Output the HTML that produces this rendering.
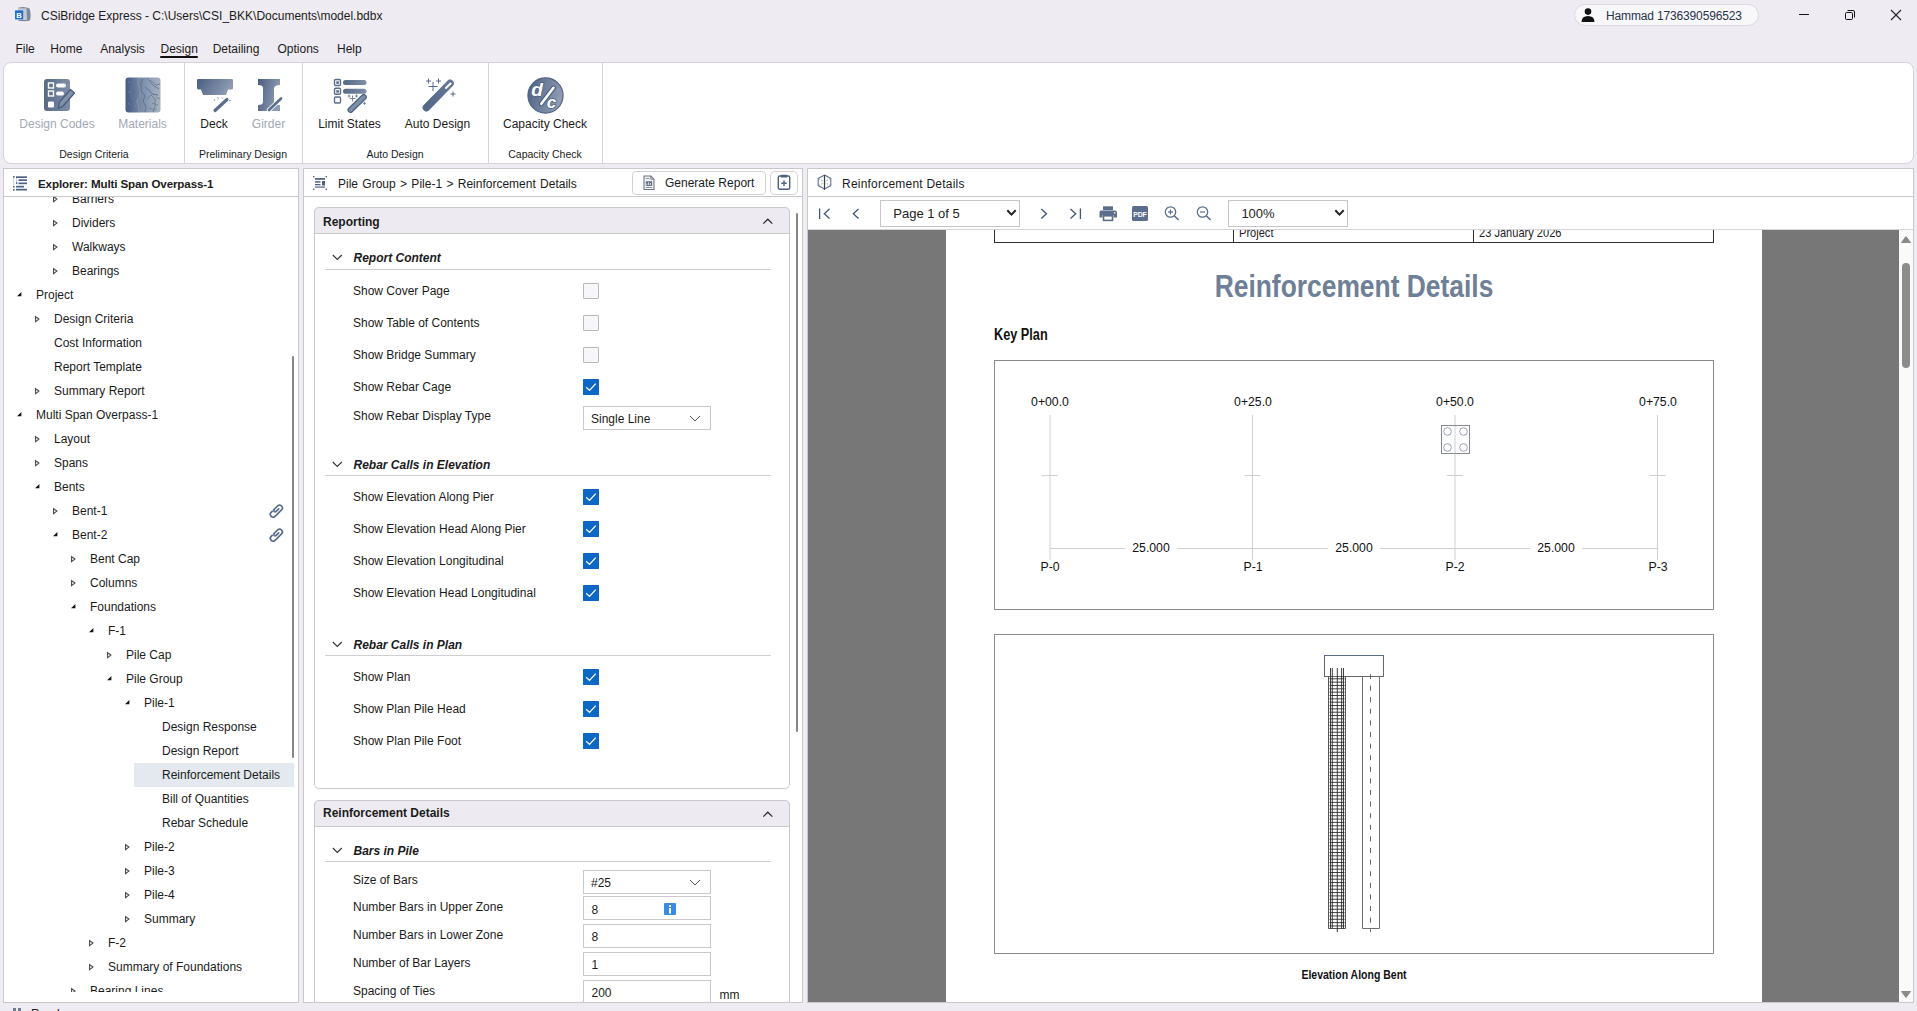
<!DOCTYPE html><html><head><meta charset="utf-8"><style>
*{box-sizing:border-box;margin:0;padding:0}
html,body{width:1917px;height:1011px;overflow:hidden;background:#EEEBF2;font-family:"Liberation Sans",sans-serif;color:#1B1B1B;position:relative}
.a{position:absolute;white-space:nowrap}
svg.a{overflow:visible}
</style></head><body><svg class="a" style="left:14px;top:6px" width="18" height="16" viewBox="0 0 18 16">
<path d="M4.5 1.5 Q11 0 15.5 2.5 Q17.5 8 16 14.5 Q11 15.8 4.5 14.8 Z" fill="#7D889B"/>
<path d="M4 2.2 L12.5 2.2 L13 14 L4 14Z" fill="#C3CAD5"/>
<rect x="1" y="4.4" width="8.2" height="9" fill="#1F6FD2"/>
<text x="2.2" y="11.8" font-family="Liberation Sans" font-weight="bold" font-size="7.6" fill="#fff">B</text>
</svg>
<div class="a" style="left:41px;top:9.84px;font-size:12px;line-height:12px;font-weight:normal;">CSiBridge Express - C:\Users\CSI_BKK\Documents\model.bdbx</div>
<div class="a" style="left:1574px;top:4px;width:185px;height:22px;background:#F8F7FA;border:1px solid #DCDAE0;border-radius:11px"></div>
<svg class="a" style="left:1580px;top:8px" width="16" height="15" viewBox="0 0 16 15"><circle cx="8" cy="3.6" r="3.3" fill="#111"/><path d="M1.5 14 Q1.5 8 8 8 Q14.5 8 14.5 14Z" fill="#111"/></svg>
<div class="a" style="left:1606px;top:9.84px;font-size:12px;line-height:12px;font-weight:normal;color:#27344A;letter-spacing:-0.15px">Hammad 1736390596523</div>
<div class="a" style="left:1799px;top:14px;width:10px;height:1px;background:#111"></div>
<svg class="a" style="left:1844px;top:9px" width="12" height="12" viewBox="0 0 12 12"><rect x="1.5" y="3.5" width="7" height="7" rx="1.2" fill="none" stroke="#111" stroke-width="1"/><path d="M3.5 1.5 H9 Q10.5 1.5 10.5 3 V8.5" fill="none" stroke="#111" stroke-width="1"/></svg>
<svg class="a" style="left:1890px;top:9px" width="12" height="12" viewBox="0 0 12 12"><path d="M1 1 L11 11 M11 1 L1 11" stroke="#222" stroke-width="1.1"/></svg>
<div class="a" style="left:15.4px;top:42.84px;font-size:12px;line-height:12px;font-weight:normal;">File</div>
<div class="a" style="left:50.3px;top:42.84px;font-size:12px;line-height:12px;font-weight:normal;">Home</div>
<div class="a" style="left:100.2px;top:42.84px;font-size:12px;line-height:12px;font-weight:normal;">Analysis</div>
<div class="a" style="left:160.5px;top:42.84px;font-size:12px;line-height:12px;font-weight:normal;">Design</div>
<div class="a" style="left:212.7px;top:42.84px;font-size:12px;line-height:12px;font-weight:normal;">Detailing</div>
<div class="a" style="left:277.5px;top:42.84px;font-size:12px;line-height:12px;font-weight:normal;">Options</div>
<div class="a" style="left:337px;top:42.84px;font-size:12px;line-height:12px;font-weight:normal;">Help</div>
<div class="a" style="left:160px;top:56px;width:38px;height:2px;background:#111;border-radius:1px"></div>
<div class="a" style="left:3px;top:62px;width:1911px;height:102px;background:#fff;border:1px solid #D6D4DA;border-radius:8px"></div>
<div class="a" style="left:184px;top:63px;width:1px;height:100px;background:#D4D2D8"></div>
<div class="a" style="left:302px;top:63px;width:1px;height:100px;background:#D4D2D8"></div>
<div class="a" style="left:488px;top:63px;width:1px;height:100px;background:#D4D2D8"></div>
<div class="a" style="left:602px;top:63px;width:1px;height:100px;background:#D4D2D8"></div>
<div class="a" style="left:-206px;width:600px;text-align:center;top:149.11px;font-size:10.5px;line-height:10.5px;font-weight:normal;">Design Criteria</div>
<div class="a" style="left:-57px;width:600px;text-align:center;top:149.11px;font-size:10.5px;line-height:10.5px;font-weight:normal;">Preliminary Design</div>
<div class="a" style="left:95px;width:600px;text-align:center;top:149.11px;font-size:10.5px;line-height:10.5px;font-weight:normal;">Auto Design</div>
<div class="a" style="left:245px;width:600px;text-align:center;top:149.11px;font-size:10.5px;line-height:10.5px;font-weight:normal;">Capacity Check</div>
<div class="a" style="left:-243px;width:600px;text-align:center;top:117.84px;font-size:12px;line-height:12px;font-weight:normal;color:#A2A9B4;">Design Codes</div>
<div class="a" style="left:-157.5px;width:600px;text-align:center;top:117.84px;font-size:12px;line-height:12px;font-weight:normal;color:#A2A9B4;">Materials</div>
<div class="a" style="left:-86px;width:600px;text-align:center;top:117.84px;font-size:12px;line-height:12px;font-weight:normal;">Deck</div>
<div class="a" style="left:-31.5px;width:600px;text-align:center;top:117.84px;font-size:12px;line-height:12px;font-weight:normal;color:#A2A9B4;">Girder</div>
<div class="a" style="left:49.5px;width:600px;text-align:center;top:117.84px;font-size:12px;line-height:12px;font-weight:normal;">Limit States</div>
<div class="a" style="left:137.5px;width:600px;text-align:center;top:117.84px;font-size:12px;line-height:12px;font-weight:normal;">Auto Design</div>
<div class="a" style="left:245px;width:600px;text-align:center;top:117.84px;font-size:12px;line-height:12px;font-weight:normal;">Capacity Check</div>
<svg class="a" style="left:43px;top:78px" width="34" height="34" viewBox="0 0 34 34"><defs><linearGradient id="g1" x1="0" y1="0" x2="1" y2="0.3"><stop offset="0" stop-color="#4B5E80"/><stop offset="1" stop-color="#8D9BB3"/></linearGradient><linearGradient id="g2" x1="0" y1="0" x2="1" y2="0"><stop offset="0" stop-color="#566987"/><stop offset="1" stop-color="#7F8FA9"/></linearGradient></defs>
<rect x="1" y="1" width="26" height="32" rx="3" fill="url(#g2)"/>
<rect x="5.5" y="5" width="5" height="5" fill="none" stroke="#fff" stroke-width="1.4"/>
<rect x="5.5" y="13" width="5" height="5" fill="none" stroke="#fff" stroke-width="1.4"/>
<rect x="5" y="23.5" width="6" height="6" rx="1" fill="#fff"/>
<rect x="13" y="5.5" width="10" height="4" rx="2" fill="#fff"/>
<rect x="13" y="13.5" width="8" height="4" rx="2" fill="#fff"/>
<path d="M15.3 30.3 L16.3 24.3 L27.5 11.5 L31.5 15 L20.3 27.8 Z" fill="#8191AB" stroke="#4A5D7E" stroke-width="1.3" stroke-linejoin="round"/>
</svg>
<svg class="a" style="left:125px;top:77px" width="36" height="36" viewBox="0 0 36 36"><defs><linearGradient id="g3" x1="0" y1="0" x2="1" y2="0"><stop offset="0" stop-color="#4A5C7D"/><stop offset="0.12" stop-color="#52658A"/><stop offset="0.45" stop-color="#7A8BA6"/><stop offset="0.75" stop-color="#95A2B7"/><stop offset="1" stop-color="#A8B0BE"/></linearGradient></defs>
<rect x="0.5" y="0.5" width="35" height="35" rx="3" fill="url(#g3)"/>
<g fill="none" stroke-width="1">
<path d="M8 1 V9 L6 12 V20 L9 24 V35" stroke="#64779A"/>
<path d="M13 1 V8 L15 11 V20 L12 24 L14 30 V35" stroke="#8797B0"/>
<path d="M18 2 L16 6 V14 L20 19 L18 24 L21 30 L20 35" stroke="#5E7193"/>
<path d="M22 1 L26 6 L29 9 L34 12" stroke="#66799A"/>
<path d="M25 3 L31 8 L35 7" stroke="#6E80A0"/>
<path d="M20 10 L24 13 L27 17 L33 18" stroke="#62759A"/>
<path d="M22 22 L26 18 L30 22 V30 L28 35" stroke="#6A7C9C"/>
<path d="M31 20 L35 22 M27 26 L33 28 M24 31 L31 33" stroke="#74869F"/>
<path d="M3 4 L5 6 M3 14 L5 16 M3 26 L5 28 M10 28 L12 31" stroke="#7F90AA" stroke-dasharray="1 1"/>
</g>
</svg>
<svg class="a" style="left:196px;top:78px" width="38" height="34" viewBox="0 0 38 34"><defs><linearGradient id="g1" x1="0" y1="0" x2="1" y2="0.3"><stop offset="0" stop-color="#4B5E80"/><stop offset="1" stop-color="#8D9BB3"/></linearGradient><linearGradient id="g2" x1="0" y1="0" x2="1" y2="0"><stop offset="0" stop-color="#566987"/><stop offset="1" stop-color="#7F8FA9"/></linearGradient></defs>
<path d="M2 1 H36 Q37 1 37 2.5 V10 Q37 11.5 35.5 11.5 H32 L30 17 H7 L5 11.5 H2.5 Q1 11.5 1 10 V2.5 Q1 1 2 1Z" fill="url(#g1)"/>
<path d="M19 32.5 L31 21.5" stroke="#5A6D8C" stroke-width="3.2" stroke-linecap="round"/>
<path d="M18 21 l1 2 M22 19 l0 2.5 M26 19.5 l1 1.5 M33 22.5 l2 0" stroke="#8D9BB3" stroke-width="0.9"/>
</svg>
<svg class="a" style="left:257px;top:78px" width="26" height="34" viewBox="0 0 26 34"><defs><linearGradient id="g1" x1="0" y1="0" x2="1" y2="0.3"><stop offset="0" stop-color="#4B5E80"/><stop offset="1" stop-color="#8D9BB3"/></linearGradient><linearGradient id="g2" x1="0" y1="0" x2="1" y2="0"><stop offset="0" stop-color="#566987"/><stop offset="1" stop-color="#7F8FA9"/></linearGradient></defs>
<path d="M1 1 H23 V7 Q18 7 17 10 V24 Q17 27 23 27 V33 H1 V27 Q6 27 6 24 V10 Q6 7 1 7Z" fill="url(#g1)"/>
<path d="M12 32 L24 20.5" stroke="#fff" stroke-width="4.5" stroke-linecap="round"/>
<path d="M12 32 L24 20.5" stroke="#5A6D8C" stroke-width="2.6" stroke-linecap="round"/>
</svg>
<svg class="a" style="left:333px;top:78px" width="36" height="36" viewBox="0 0 36 36"><defs><linearGradient id="g1" x1="0" y1="0" x2="1" y2="0.3"><stop offset="0" stop-color="#4B5E80"/><stop offset="1" stop-color="#8D9BB3"/></linearGradient><linearGradient id="g2" x1="0" y1="0" x2="1" y2="0"><stop offset="0" stop-color="#566987"/><stop offset="1" stop-color="#7F8FA9"/></linearGradient></defs>
<rect x="1.5" y="1.5" width="6" height="6" rx="1.2" fill="none" stroke="#5A6D8C" stroke-width="1.4"/><rect x="3.3" y="3.3" width="2.6" height="2.6" fill="#5A6D8C"/>
<rect x="1.5" y="10.3" width="6" height="6" rx="1.2" fill="none" stroke="#5A6D8C" stroke-width="1.4"/><rect x="3.3" y="12.1" width="2.6" height="2.6" fill="#5A6D8C"/>
<rect x="1.5" y="19" width="6" height="6" rx="1.2" fill="none" stroke="#5A6D8C" stroke-width="1.4"/>
<rect x="10" y="2" width="23.5" height="5" rx="2.5" fill="url(#g2)"/>
<rect x="10" y="10.8" width="23.5" height="5" rx="2.5" fill="url(#g2)"/>
<path d="M17.5 32 L30.8 19" stroke="#4F6283" stroke-width="6" stroke-linecap="round"/>
<path d="M17.5 32 L30.8 19" stroke="#7F90AA" stroke-width="3.4" stroke-linecap="round"/>
<path d="M16.5 20.5 h6 M19.5 17.5 v6 M14.5 18 h3 M16 16.5 v3 M22 18 h3 M23.5 16.5 v3 M30 25.3 h3 M31.5 23.8 v3" stroke="#6A7B98" stroke-width="0.9"/>
</svg>
<svg class="a" style="left:419px;top:77px" width="38" height="36" viewBox="0 0 38 36"><defs><linearGradient id="g1" x1="0" y1="0" x2="1" y2="0.3"><stop offset="0" stop-color="#4B5E80"/><stop offset="1" stop-color="#8D9BB3"/></linearGradient><linearGradient id="g2" x1="0" y1="0" x2="1" y2="0"><stop offset="0" stop-color="#566987"/><stop offset="1" stop-color="#7F8FA9"/></linearGradient></defs>
<path d="M7.5 30.5 L31 6.5" stroke="url(#g2)" stroke-width="7.5" stroke-linecap="round"/>
<path d="M7.5 30.5 L31 6.5" stroke="#55688A" stroke-width="7.5" stroke-linecap="round" opacity="0.6"/>
<path d="M27 11 L31.5 6.5" stroke="#fff" stroke-width="2" stroke-linecap="round"/>
<path d="M9.5 9.5 h9 M14 5 v9 M7 4 h5 M9.5 1.5 v5 M17 4 h5 M19.5 1.5 v5 M31.5 17 h5 M34 14.5 v5" stroke="#5A6D8C" stroke-width="1"/>
</svg>
<svg class="a" style="left:527px;top:77px" width="37" height="37" viewBox="0 0 37 37"><defs><linearGradient id="g1" x1="0" y1="0" x2="1" y2="0.3"><stop offset="0" stop-color="#4B5E80"/><stop offset="1" stop-color="#8D9BB3"/></linearGradient><linearGradient id="g2" x1="0" y1="0" x2="1" y2="0"><stop offset="0" stop-color="#566987"/><stop offset="1" stop-color="#7F8FA9"/></linearGradient></defs>
<circle cx="18.5" cy="18.5" r="17.6" fill="url(#g1)" stroke="#4E6184" stroke-width="1.1"/>
<text x="4.3" y="18.8" font-family="Liberation Sans" font-style="italic" font-weight="bold" font-size="19" fill="#fff" stroke="#4E6184" stroke-width="1.4" paint-order="stroke">d</text>
<path d="M14.3 26.8 L26.5 10.8" stroke="#4E6184" stroke-width="5" stroke-linecap="round"/>
<path d="M14.3 26.8 L26.5 10.8" stroke="#fff" stroke-width="2.6" stroke-linecap="round"/>
<text x="19.8" y="30.8" font-family="Liberation Sans" font-style="italic" font-weight="bold" font-size="17" fill="#fff" stroke="#4E6184" stroke-width="1.4" paint-order="stroke">c</text>
</svg>
<div class="a" style="left:3px;top:168px;width:296px;height:835px;background:#fff;border:1px solid #C9C9C9"></div>
<div class="a" style="left:303px;top:168px;width:500px;height:835px;background:#fff;border:1px solid #C9C9C9"></div>
<div class="a" style="left:807px;top:168px;width:1107px;height:835px;background:#fff;border:1px solid #C9C9C9"></div>
<div class="a" style="left:4px;top:196px;width:294px;height:1px;background:#C9C9C9"></div>
<div class="a" style="left:304px;top:196px;width:498px;height:1px;background:#C9C9C9"></div>
<div class="a" style="left:808px;top:196px;width:1105px;height:1px;background:#C9C9C9"></div>
<svg class="a" style="left:13px;top:176px" width="15" height="15" viewBox="0 0 15 15">
<rect x="0" y="0" width="1.6" height="1.6" fill="#4D6185"/><rect x="0" y="10" width="1.6" height="1.6" fill="#4D6185"/><rect x="0" y="13" width="1.6" height="1.6" fill="#4D6185"/>
<rect x="0.3" y="2" width="0.8" height="7.5" fill="#B8C0CC"/>
<rect x="3" y="0.3" width="11" height="1.7" fill="#4D6185"/>
<rect x="5.5" y="3.3" width="8.5" height="1.7" fill="#4D6185"/>
<rect x="5.5" y="6.5" width="8.5" height="1.7" fill="#4D6185"/>
<rect x="3" y="9.8" width="8" height="1.7" fill="#4D6185"/>
<rect x="3" y="12.8" width="11" height="1.7" fill="#4D6185"/>
<rect x="3" y="2" width="0.8" height="5.5" fill="#B8C0CC"/><rect x="3" y="6.3" width="1.3" height="1.8" fill="#4D6185"/>
</svg>
<div class="a" style="left:38px;top:177.98px;font-size:11.6px;line-height:11.6px;font-weight:bold;color:#202020;letter-spacing:-0.12px">Explorer: Multi Span Overpass-1</div>
<div class="a" style="left:4px;top:197px;width:294px;height:795px;overflow:hidden">
<div class="a" style="left:130px;top:566px;width:160px;height:24px;background:#E4E8EF"></div>
<svg class="a" style="left:49px;top:-1px" width="5" height="7" viewBox="0 0 5 7"><path d="M0.6 0.6 L3.9 3.1 L0.6 5.6 Z" fill="none" stroke="#4A4A4A" stroke-width="1.15"/></svg>
<div class="a" style="left:68px;top:-4.16px;font-size:12px;line-height:12px;font-weight:normal;">Barriers</div>
<svg class="a" style="left:49px;top:23px" width="5" height="7" viewBox="0 0 5 7"><path d="M0.6 0.6 L3.9 3.1 L0.6 5.6 Z" fill="none" stroke="#4A4A4A" stroke-width="1.15"/></svg>
<div class="a" style="left:68px;top:19.84px;font-size:12px;line-height:12px;font-weight:normal;">Dividers</div>
<svg class="a" style="left:49px;top:47px" width="5" height="7" viewBox="0 0 5 7"><path d="M0.6 0.6 L3.9 3.1 L0.6 5.6 Z" fill="none" stroke="#4A4A4A" stroke-width="1.15"/></svg>
<div class="a" style="left:68px;top:43.84px;font-size:12px;line-height:12px;font-weight:normal;">Walkways</div>
<svg class="a" style="left:49px;top:71px" width="5" height="7" viewBox="0 0 5 7"><path d="M0.6 0.6 L3.9 3.1 L0.6 5.6 Z" fill="none" stroke="#4A4A4A" stroke-width="1.15"/></svg>
<div class="a" style="left:68px;top:67.84px;font-size:12px;line-height:12px;font-weight:normal;">Bearings</div>
<svg class="a" style="left:13px;top:95px" width="5" height="5" viewBox="0 0 5 5"><path d="M4.4 0 L4.4 4.3 L0 4.3 Z" fill="#111"/></svg>
<div class="a" style="left:32px;top:91.84px;font-size:12px;line-height:12px;font-weight:normal;">Project</div>
<svg class="a" style="left:31px;top:119px" width="5" height="7" viewBox="0 0 5 7"><path d="M0.6 0.6 L3.9 3.1 L0.6 5.6 Z" fill="none" stroke="#4A4A4A" stroke-width="1.15"/></svg>
<div class="a" style="left:50px;top:115.84px;font-size:12px;line-height:12px;font-weight:normal;">Design Criteria</div>
<div class="a" style="left:50px;top:139.84px;font-size:12px;line-height:12px;font-weight:normal;">Cost Information</div>
<div class="a" style="left:50px;top:163.84px;font-size:12px;line-height:12px;font-weight:normal;">Report Template</div>
<svg class="a" style="left:31px;top:191px" width="5" height="7" viewBox="0 0 5 7"><path d="M0.6 0.6 L3.9 3.1 L0.6 5.6 Z" fill="none" stroke="#4A4A4A" stroke-width="1.15"/></svg>
<div class="a" style="left:50px;top:187.84px;font-size:12px;line-height:12px;font-weight:normal;">Summary Report</div>
<svg class="a" style="left:13px;top:215px" width="5" height="5" viewBox="0 0 5 5"><path d="M4.4 0 L4.4 4.3 L0 4.3 Z" fill="#111"/></svg>
<div class="a" style="left:32px;top:211.84px;font-size:12px;line-height:12px;font-weight:normal;">Multi Span Overpass-1</div>
<svg class="a" style="left:31px;top:239px" width="5" height="7" viewBox="0 0 5 7"><path d="M0.6 0.6 L3.9 3.1 L0.6 5.6 Z" fill="none" stroke="#4A4A4A" stroke-width="1.15"/></svg>
<div class="a" style="left:50px;top:235.84px;font-size:12px;line-height:12px;font-weight:normal;">Layout</div>
<svg class="a" style="left:31px;top:263px" width="5" height="7" viewBox="0 0 5 7"><path d="M0.6 0.6 L3.9 3.1 L0.6 5.6 Z" fill="none" stroke="#4A4A4A" stroke-width="1.15"/></svg>
<div class="a" style="left:50px;top:259.84px;font-size:12px;line-height:12px;font-weight:normal;">Spans</div>
<svg class="a" style="left:31px;top:287px" width="5" height="5" viewBox="0 0 5 5"><path d="M4.4 0 L4.4 4.3 L0 4.3 Z" fill="#111"/></svg>
<div class="a" style="left:50px;top:283.84px;font-size:12px;line-height:12px;font-weight:normal;">Bents</div>
<svg class="a" style="left:49px;top:311px" width="5" height="7" viewBox="0 0 5 7"><path d="M0.6 0.6 L3.9 3.1 L0.6 5.6 Z" fill="none" stroke="#4A4A4A" stroke-width="1.15"/></svg>
<div class="a" style="left:68px;top:307.84px;font-size:12px;line-height:12px;font-weight:normal;">Bent-1</div>
<svg class="a" style="left:49px;top:335px" width="5" height="5" viewBox="0 0 5 5"><path d="M4.4 0 L4.4 4.3 L0 4.3 Z" fill="#111"/></svg>
<div class="a" style="left:68px;top:331.84px;font-size:12px;line-height:12px;font-weight:normal;">Bent-2</div>
<svg class="a" style="left:67px;top:359px" width="5" height="7" viewBox="0 0 5 7"><path d="M0.6 0.6 L3.9 3.1 L0.6 5.6 Z" fill="none" stroke="#4A4A4A" stroke-width="1.15"/></svg>
<div class="a" style="left:86px;top:355.84px;font-size:12px;line-height:12px;font-weight:normal;">Bent Cap</div>
<svg class="a" style="left:67px;top:383px" width="5" height="7" viewBox="0 0 5 7"><path d="M0.6 0.6 L3.9 3.1 L0.6 5.6 Z" fill="none" stroke="#4A4A4A" stroke-width="1.15"/></svg>
<div class="a" style="left:86px;top:379.84px;font-size:12px;line-height:12px;font-weight:normal;">Columns</div>
<svg class="a" style="left:67px;top:407px" width="5" height="5" viewBox="0 0 5 5"><path d="M4.4 0 L4.4 4.3 L0 4.3 Z" fill="#111"/></svg>
<div class="a" style="left:86px;top:403.84px;font-size:12px;line-height:12px;font-weight:normal;">Foundations</div>
<svg class="a" style="left:85px;top:431px" width="5" height="5" viewBox="0 0 5 5"><path d="M4.4 0 L4.4 4.3 L0 4.3 Z" fill="#111"/></svg>
<div class="a" style="left:104px;top:427.84px;font-size:12px;line-height:12px;font-weight:normal;">F-1</div>
<svg class="a" style="left:103px;top:455px" width="5" height="7" viewBox="0 0 5 7"><path d="M0.6 0.6 L3.9 3.1 L0.6 5.6 Z" fill="none" stroke="#4A4A4A" stroke-width="1.15"/></svg>
<div class="a" style="left:122px;top:451.84px;font-size:12px;line-height:12px;font-weight:normal;">Pile Cap</div>
<svg class="a" style="left:103px;top:479px" width="5" height="5" viewBox="0 0 5 5"><path d="M4.4 0 L4.4 4.3 L0 4.3 Z" fill="#111"/></svg>
<div class="a" style="left:122px;top:475.84px;font-size:12px;line-height:12px;font-weight:normal;">Pile Group</div>
<svg class="a" style="left:121px;top:503px" width="5" height="5" viewBox="0 0 5 5"><path d="M4.4 0 L4.4 4.3 L0 4.3 Z" fill="#111"/></svg>
<div class="a" style="left:140px;top:499.84px;font-size:12px;line-height:12px;font-weight:normal;">Pile-1</div>
<div class="a" style="left:158px;top:523.84px;font-size:12px;line-height:12px;font-weight:normal;">Design Response</div>
<div class="a" style="left:158px;top:547.84px;font-size:12px;line-height:12px;font-weight:normal;">Design Report</div>
<div class="a" style="left:158px;top:571.84px;font-size:12px;line-height:12px;font-weight:normal;">Reinforcement Details</div>
<div class="a" style="left:158px;top:595.84px;font-size:12px;line-height:12px;font-weight:normal;">Bill of Quantities</div>
<div class="a" style="left:158px;top:619.84px;font-size:12px;line-height:12px;font-weight:normal;">Rebar Schedule</div>
<svg class="a" style="left:121px;top:647px" width="5" height="7" viewBox="0 0 5 7"><path d="M0.6 0.6 L3.9 3.1 L0.6 5.6 Z" fill="none" stroke="#4A4A4A" stroke-width="1.15"/></svg>
<div class="a" style="left:140px;top:643.84px;font-size:12px;line-height:12px;font-weight:normal;">Pile-2</div>
<svg class="a" style="left:121px;top:671px" width="5" height="7" viewBox="0 0 5 7"><path d="M0.6 0.6 L3.9 3.1 L0.6 5.6 Z" fill="none" stroke="#4A4A4A" stroke-width="1.15"/></svg>
<div class="a" style="left:140px;top:667.84px;font-size:12px;line-height:12px;font-weight:normal;">Pile-3</div>
<svg class="a" style="left:121px;top:695px" width="5" height="7" viewBox="0 0 5 7"><path d="M0.6 0.6 L3.9 3.1 L0.6 5.6 Z" fill="none" stroke="#4A4A4A" stroke-width="1.15"/></svg>
<div class="a" style="left:140px;top:691.84px;font-size:12px;line-height:12px;font-weight:normal;">Pile-4</div>
<svg class="a" style="left:121px;top:719px" width="5" height="7" viewBox="0 0 5 7"><path d="M0.6 0.6 L3.9 3.1 L0.6 5.6 Z" fill="none" stroke="#4A4A4A" stroke-width="1.15"/></svg>
<div class="a" style="left:140px;top:715.84px;font-size:12px;line-height:12px;font-weight:normal;">Summary</div>
<svg class="a" style="left:85px;top:743px" width="5" height="7" viewBox="0 0 5 7"><path d="M0.6 0.6 L3.9 3.1 L0.6 5.6 Z" fill="none" stroke="#4A4A4A" stroke-width="1.15"/></svg>
<div class="a" style="left:104px;top:739.84px;font-size:12px;line-height:12px;font-weight:normal;">F-2</div>
<svg class="a" style="left:85px;top:767px" width="5" height="7" viewBox="0 0 5 7"><path d="M0.6 0.6 L3.9 3.1 L0.6 5.6 Z" fill="none" stroke="#4A4A4A" stroke-width="1.15"/></svg>
<div class="a" style="left:104px;top:763.84px;font-size:12px;line-height:12px;font-weight:normal;">Summary of Foundations</div>
<svg class="a" style="left:67px;top:791px" width="5" height="7" viewBox="0 0 5 7"><path d="M0.6 0.6 L3.9 3.1 L0.6 5.6 Z" fill="none" stroke="#4A4A4A" stroke-width="1.15"/></svg>
<div class="a" style="left:86px;top:787.84px;font-size:12px;line-height:12px;font-weight:normal;">Bearing Lines</div>
</div>
<svg class="a" style="left:266px;top:503px" width="20" height="18" viewBox="0 0 20 18"><path transform="translate(10.5 8) rotate(45) translate(0 -6.3)" d="M-2.8 9.6 V11 A2.8 2.8 0 0 0 2.8 11 V2 A2.8 2.8 0 0 0 -2.8 2 V6.8 A1.4 1.4 0 0 0 0 6.8 V3.2" fill="none" stroke="#5A6D8C" stroke-width="1.7" stroke-linecap="round"/></svg>
<svg class="a" style="left:266px;top:527px" width="20" height="18" viewBox="0 0 20 18"><path transform="translate(10.5 8) rotate(45) translate(0 -6.3)" d="M-2.8 9.6 V11 A2.8 2.8 0 0 0 2.8 11 V2 A2.8 2.8 0 0 0 -2.8 2 V6.8 A1.4 1.4 0 0 0 0 6.8 V3.2" fill="none" stroke="#5A6D8C" stroke-width="1.7" stroke-linecap="round"/></svg>
<div class="a" style="left:292px;top:356px;width:2px;height:402px;background:#868686;border-radius:1px"></div>
<svg class="a" style="left:313px;top:176px" width="14" height="14" viewBox="0 0 14 14">
<rect x="0" y="0" width="1.4" height="1.4" fill="#4D6185"/><rect x="12.6" y="0" width="1.4" height="1.4" fill="#4D6185"/>
<rect x="0" y="12.6" width="1.4" height="1.4" fill="#4D6185"/><rect x="12.6" y="12.6" width="1.4" height="1.4" fill="#4D6185"/>
<rect x="2" y="2.1" width="10" height="1.7" fill="#4D6185"/>
<rect x="2" y="5.2" width="5.5" height="1.5" fill="#4D6185"/>
<rect x="2" y="8" width="5.5" height="1.3" fill="#4D6185"/>
<rect x="9" y="5" width="3" height="4.5" fill="#4D6185"/>
<rect x="2" y="10.3" width="10" height="1.7" fill="#8592A8"/>
</svg>
<div class="a" style="left:338px;top:177.84px;font-size:12px;line-height:12px;font-weight:normal;word-spacing:1px">Pile Group &gt; Pile-1 &gt; Reinforcement Details</div>
<div class="a" style="left:632px;top:171px;width:134px;height:24px;background:#fff;border:1px solid #D3D1D7;border-radius:4px"></div>
<svg class="a" style="left:643px;top:175px" width="12" height="16" viewBox="0 0 12 16">
<path d="M1 1 H7.8 L11 4.2 V14.5 H1 Z" fill="#F2F3F5" stroke="#6E7480" stroke-width="1.1"/>
<path d="M7.8 1 V4.2 H11" fill="none" stroke="#6E7480" stroke-width="0.9"/>
<rect x="2.8" y="3" width="3.5" height="1" fill="#8A909A"/>
<rect x="2.8" y="6.3" width="6.4" height="4.6" fill="#5D6B82"/>
<path d="M3.8 10 V8.5 M5.6 10 V7.3 M7.4 10 V8" stroke="#fff" stroke-width="0.8"/>
<rect x="2.8" y="12" width="6.4" height="1" fill="#8A909A"/>
</svg>
<div class="a" style="left:665px;top:177.44px;font-size:12px;line-height:12px;font-weight:normal;">Generate Report</div>
<div class="a" style="left:770px;top:171px;width:28px;height:24px;background:#fff;border:1px solid #D3D1D7;border-radius:5px"></div>
<svg class="a" style="left:777px;top:174px" width="14" height="16" viewBox="0 0 14 16">
<rect x="1.3" y="2" width="11.4" height="13.2" rx="1.5" fill="none" stroke="#4D6185" stroke-width="1.4"/>
<rect x="3.8" y="0.8" width="6.4" height="2.6" rx="0.6" fill="#4D6185"/>
<path d="M7 6.5 V12 M4.3 9.2 H9.7" stroke="#4D6185" stroke-width="1.5"/>
</svg>
<div class="a" style="left:304px;top:197px;width:498px;height:805px;overflow:hidden">
<div class="a" style="left:10px;top:10px;width:476px;height:582px;background:#fff;border:1px solid #C9C9C9;border-radius:5px"></div>
<div class="a" style="left:10px;top:10px;width:476px;height:27px;background:#EDEBF1;border:1px solid #C9C9C9;border-radius:5px 5px 0 0"></div>
<div class="a" style="left:19px;top:18.84px;font-size:12px;line-height:12px;font-weight:bold;">Reporting</div>
<svg class="a" style="left:458px;top:21px" width="12" height="7" viewBox="0 0 12 7"><path d="M1.3 5.6 L5.8 1.2 L10.3 5.6" fill="none" stroke="#2A2A2A" stroke-width="1.2"/></svg>
<svg class="a" style="left:28px;top:57.0px" width="11" height="7" viewBox="0 0 11 7"><path d="M0.8 1 L5.3 5.4 L9.8 1" fill="none" stroke="#333" stroke-width="1.1"/></svg>
<div class="a" style="left:49.5px;top:55.14px;font-size:12px;line-height:12px;font-weight:bold;font-style:italic">Report Content</div>
<div class="a" style="left:21px;top:72px;width:446px;height:1px;background:#CFCFD3"></div>
<div class="a" style="left:49px;top:88.34px;font-size:12px;line-height:12px;font-weight:normal;">Show Cover Page</div>
<div class="a" style="left:279px;top:86px;width:16px;height:16px;background:#F7F7F9;border:1px solid #B9B9BD;border-radius:1px"></div>
<div class="a" style="left:49px;top:120.34px;font-size:12px;line-height:12px;font-weight:normal;">Show Table of Contents</div>
<div class="a" style="left:279px;top:118px;width:16px;height:16px;background:#F7F7F9;border:1px solid #B9B9BD;border-radius:1px"></div>
<div class="a" style="left:49px;top:152.34px;font-size:12px;line-height:12px;font-weight:normal;">Show Bridge Summary</div>
<div class="a" style="left:279px;top:150px;width:16px;height:16px;background:#F7F7F9;border:1px solid #B9B9BD;border-radius:1px"></div>
<div class="a" style="left:49px;top:184.34px;font-size:12px;line-height:12px;font-weight:normal;">Show Rebar Cage</div>
<svg class="a" style="left:279px;top:182px" width="16" height="16" viewBox="0 0 16 16"><rect x="0" y="0" width="16" height="16" rx="0.6" fill="#0E66C6"/><path d="M3.2 8.3 L6.5 11.4 L12.8 4.6" fill="none" stroke="#fff" stroke-width="1.3"/></svg>
<div class="a" style="left:49px;top:213.34px;font-size:12px;line-height:12px;font-weight:normal;">Show Rebar Display Type</div>
<div class="a" style="left:279px;top:209px;width:128px;height:24px;background:#fff;border:1px solid #C9C9CD"></div>
<div class="a" style="left:287px;top:216.34px;font-size:12px;line-height:12px;font-weight:normal;">Single Line</div>
<svg class="a" style="left:385px;top:218px" width="12" height="7" viewBox="0 0 12 7"><path d="M1 1 L6 6 L11 1" fill="none" stroke="#555" stroke-width="1"/></svg>
<svg class="a" style="left:28px;top:264.0px" width="11" height="7" viewBox="0 0 11 7"><path d="M0.8 1 L5.3 5.4 L9.8 1" fill="none" stroke="#333" stroke-width="1.1"/></svg>
<div class="a" style="left:49.5px;top:262.14px;font-size:12px;line-height:12px;font-weight:bold;font-style:italic">Rebar Calls in Elevation</div>
<div class="a" style="left:21px;top:278px;width:446px;height:1px;background:#CFCFD3"></div>
<div class="a" style="left:49px;top:294.34px;font-size:12px;line-height:12px;font-weight:normal;">Show Elevation Along Pier</div>
<svg class="a" style="left:279px;top:292px" width="16" height="16" viewBox="0 0 16 16"><rect x="0" y="0" width="16" height="16" rx="0.6" fill="#0E66C6"/><path d="M3.2 8.3 L6.5 11.4 L12.8 4.6" fill="none" stroke="#fff" stroke-width="1.3"/></svg>
<div class="a" style="left:49px;top:326.34px;font-size:12px;line-height:12px;font-weight:normal;">Show Elevation Head Along Pier</div>
<svg class="a" style="left:279px;top:324px" width="16" height="16" viewBox="0 0 16 16"><rect x="0" y="0" width="16" height="16" rx="0.6" fill="#0E66C6"/><path d="M3.2 8.3 L6.5 11.4 L12.8 4.6" fill="none" stroke="#fff" stroke-width="1.3"/></svg>
<div class="a" style="left:49px;top:358.34px;font-size:12px;line-height:12px;font-weight:normal;">Show Elevation Longitudinal</div>
<svg class="a" style="left:279px;top:356px" width="16" height="16" viewBox="0 0 16 16"><rect x="0" y="0" width="16" height="16" rx="0.6" fill="#0E66C6"/><path d="M3.2 8.3 L6.5 11.4 L12.8 4.6" fill="none" stroke="#fff" stroke-width="1.3"/></svg>
<div class="a" style="left:49px;top:390.34px;font-size:12px;line-height:12px;font-weight:normal;">Show Elevation Head Longitudinal</div>
<svg class="a" style="left:279px;top:388px" width="16" height="16" viewBox="0 0 16 16"><rect x="0" y="0" width="16" height="16" rx="0.6" fill="#0E66C6"/><path d="M3.2 8.3 L6.5 11.4 L12.8 4.6" fill="none" stroke="#fff" stroke-width="1.3"/></svg>
<svg class="a" style="left:28px;top:444.0px" width="11" height="7" viewBox="0 0 11 7"><path d="M0.8 1 L5.3 5.4 L9.8 1" fill="none" stroke="#333" stroke-width="1.1"/></svg>
<div class="a" style="left:49.5px;top:442.14px;font-size:12px;line-height:12px;font-weight:bold;font-style:italic">Rebar Calls in Plan</div>
<div class="a" style="left:21px;top:458px;width:446px;height:1px;background:#CFCFD3"></div>
<div class="a" style="left:49px;top:474.34px;font-size:12px;line-height:12px;font-weight:normal;">Show Plan</div>
<svg class="a" style="left:279px;top:472px" width="16" height="16" viewBox="0 0 16 16"><rect x="0" y="0" width="16" height="16" rx="0.6" fill="#0E66C6"/><path d="M3.2 8.3 L6.5 11.4 L12.8 4.6" fill="none" stroke="#fff" stroke-width="1.3"/></svg>
<div class="a" style="left:49px;top:506.34px;font-size:12px;line-height:12px;font-weight:normal;">Show Plan Pile Head</div>
<svg class="a" style="left:279px;top:504px" width="16" height="16" viewBox="0 0 16 16"><rect x="0" y="0" width="16" height="16" rx="0.6" fill="#0E66C6"/><path d="M3.2 8.3 L6.5 11.4 L12.8 4.6" fill="none" stroke="#fff" stroke-width="1.3"/></svg>
<div class="a" style="left:49px;top:538.34px;font-size:12px;line-height:12px;font-weight:normal;">Show Plan Pile Foot</div>
<svg class="a" style="left:279px;top:536px" width="16" height="16" viewBox="0 0 16 16"><rect x="0" y="0" width="16" height="16" rx="0.6" fill="#0E66C6"/><path d="M3.2 8.3 L6.5 11.4 L12.8 4.6" fill="none" stroke="#fff" stroke-width="1.3"/></svg>
<div class="a" style="left:10px;top:603px;width:476px;height:241px;background:#fff;border:1px solid #C9C9C9;border-radius:5px"></div>
<div class="a" style="left:10px;top:603px;width:476px;height:27px;background:#EDEBF1;border:1px solid #C9C9C9;border-radius:5px 5px 0 0"></div>
<div class="a" style="left:19px;top:610.34px;font-size:12px;line-height:12px;font-weight:bold;">Reinforcement Details</div>
<svg class="a" style="left:458px;top:614px" width="12" height="7" viewBox="0 0 12 7"><path d="M1.3 5.6 L5.8 1.2 L10.3 5.6" fill="none" stroke="#2A2A2A" stroke-width="1.2"/></svg>
<svg class="a" style="left:28px;top:649.5px" width="11" height="7" viewBox="0 0 11 7"><path d="M0.8 1 L5.3 5.4 L9.8 1" fill="none" stroke="#333" stroke-width="1.1"/></svg>
<div class="a" style="left:49.5px;top:647.64px;font-size:12px;line-height:12px;font-weight:bold;font-style:italic">Bars in Pile</div>
<div class="a" style="left:21px;top:664px;width:446px;height:1px;background:#CFCFD3"></div>
<div class="a" style="left:49px;top:676.84px;font-size:12px;line-height:12px;font-weight:normal;">Size of Bars</div>
<div class="a" style="left:279px;top:673px;width:128px;height:24px;background:#fff;border:1px solid #C9C9CD"></div>
<div class="a" style="left:287px;top:679.84px;font-size:12px;line-height:12px;font-weight:normal;">#25</div>
<svg class="a" style="left:385px;top:682px" width="12" height="7" viewBox="0 0 12 7"><path d="M1 1 L6 6 L11 1" fill="none" stroke="#555" stroke-width="1"/></svg>
<div class="a" style="left:49px;top:703.84px;font-size:12px;line-height:12px;font-weight:normal;">Number Bars in Upper Zone</div>
<div class="a" style="left:279px;top:699px;width:128px;height:24px;background:#fff;border:1px solid #C9C9CD"></div>
<div class="a" style="left:287.5px;top:706.84px;font-size:12px;line-height:12px;font-weight:normal;">8</div>
<svg class="a" style="left:360px;top:706px" width="12" height="12" viewBox="0 0 12 12"><rect x="0" y="0" width="12" height="12" rx="1" fill="#3D8BE0"/><rect x="5" y="2" width="2" height="2" fill="#fff"/><rect x="5" y="5" width="2" height="5.5" fill="#fff"/></svg>
<div class="a" style="left:49px;top:731.84px;font-size:12px;line-height:12px;font-weight:normal;">Number Bars in Lower Zone</div>
<div class="a" style="left:279px;top:727px;width:128px;height:24px;background:#fff;border:1px solid #C9C9CD"></div>
<div class="a" style="left:287.5px;top:734.34px;font-size:12px;line-height:12px;font-weight:normal;">8</div>
<div class="a" style="left:49px;top:759.84px;font-size:12px;line-height:12px;font-weight:normal;">Number of Bar Layers</div>
<div class="a" style="left:279px;top:755px;width:128px;height:24px;background:#fff;border:1px solid #C9C9CD"></div>
<div class="a" style="left:287.5px;top:762.34px;font-size:12px;line-height:12px;font-weight:normal;">1</div>
<div class="a" style="left:49px;top:787.84px;font-size:12px;line-height:12px;font-weight:normal;">Spacing of Ties</div>
<div class="a" style="left:279px;top:783px;width:128px;height:24px;background:#fff;border:1px solid #C9C9CD"></div>
<div class="a" style="left:287.5px;top:789.84px;font-size:12px;line-height:12px;font-weight:normal;">200</div>
<div class="a" style="left:415.5px;top:791.84px;font-size:12px;line-height:12px;font-weight:normal;">mm</div>
</div>
<div class="a" style="left:796px;top:213px;width:2px;height:519px;background:#868686;border-radius:1px"></div>
<svg class="a" style="left:817px;top:174px" width="15" height="16" viewBox="0 0 15 16">
<path d="M7.5 1 L13.8 4.4 V11.6 L7.5 15 L1.2 11.6 V4.4 Z" fill="none" stroke="#5F7393" stroke-width="1.1"/>
<path d="M1.5 4.6 L7.5 7.6 L13.5 4.6 M1.5 11.4 L7.5 8.6 L13.5 11.4" fill="none" stroke="#7C8BA3" stroke-width="0.9" stroke-dasharray="1.5 1.5"/>
<path d="M7.5 1 V15.8" stroke="#3A3F48" stroke-width="1.2"/>
</svg>
<div class="a" style="left:842px;top:177.84px;font-size:12px;line-height:12px;font-weight:normal;letter-spacing:0.22px">Reinforcement Details</div>
<div class="a" style="left:808px;top:229px;width:1105px;height:1px;background:#D6D6DA"></div>
<svg class="a" style="left:818px;top:208px" width="14" height="12" viewBox="0 0 14 12"><path d="M1.6 0.5 V11" stroke="#3D5576" stroke-width="1.3"/><path d="M11.5 1 L6.3 5.8 L11.5 10.6" fill="none" stroke="#3D5576" stroke-width="1.3"/></svg>
<svg class="a" style="left:851px;top:208px" width="10" height="12" viewBox="0 0 10 12"><path d="M7.5 1 L2.3 5.8 L7.5 10.6" fill="none" stroke="#3D5576" stroke-width="1.3"/></svg>
<div class="a" style="left:880px;top:200px;width:140px;height:27px;background:#fff;border:1px solid #C6C6C6"></div>
<div class="a" style="left:893.3px;top:207.30px;font-size:13px;line-height:13px;font-weight:normal;color:#222;">Page 1 of 5</div>
<svg class="a" style="left:1006px;top:209px" width="11" height="8" viewBox="0 0 11 8"><path d="M1.3 1.3 L5.5 5.6 L9.7 1.3" fill="none" stroke="#222" stroke-width="2"/></svg>
<svg class="a" style="left:1039px;top:208px" width="10" height="12" viewBox="0 0 10 12"><path d="M2.3 1 L7.5 5.8 L2.3 10.6" fill="none" stroke="#3D5576" stroke-width="1.3"/></svg>
<svg class="a" style="left:1069px;top:208px" width="14" height="12" viewBox="0 0 14 12"><path d="M1.5 1 L6.7 5.8 L1.5 10.6" fill="none" stroke="#3D5576" stroke-width="1.3"/><path d="M11.4 0.5 V11" stroke="#3D5576" stroke-width="1.3"/></svg>
<svg class="a" style="left:1099px;top:206px" width="19" height="15" viewBox="0 0 19 15">
<rect x="4" y="0.3" width="10" height="3.8" fill="#5B6E8B"/>
<path d="M2 4.6 H16 Q18 4.6 18 6.6 V11.5 H14.5 V9 H3.5 V11.5 H0.5 V6.6 Q0.5 4.6 2 4.6Z" fill="#5B6E8B"/>
<rect x="4.5" y="9.8" width="9" height="4.6" fill="none" stroke="#5B6E8B" stroke-width="1.6"/>
<rect x="15" y="6.2" width="1.4" height="1.3" fill="#fff"/>
</svg>
<svg class="a" style="left:1132px;top:206px" width="16" height="15" viewBox="0 0 16 15"><rect x="0" y="0" width="16" height="15" rx="1.5" fill="#5B6E8B"/><text x="8" y="10.6" text-anchor="middle" font-family="Liberation Sans" font-weight="bold" font-size="7" fill="#fff" letter-spacing="-0.2">PDF</text></svg>
<svg class="a" style="left:1164px;top:206px" width="16" height="16" viewBox="0 0 16 16"><circle cx="6.5" cy="6" r="5.2" fill="none" stroke="#5B6E8B" stroke-width="1.3"/><path d="M10.3 9.8 L14.6 14" stroke="#5B6E8B" stroke-width="1.6"/><path d="M4 6 H9" stroke="#5B6E8B" stroke-width="1.2"/><path d="M6.5 3.5 V8.5" stroke="#5B6E8B" stroke-width="1.2"/></svg>
<svg class="a" style="left:1196px;top:206px" width="16" height="16" viewBox="0 0 16 16"><circle cx="6.5" cy="6" r="5.2" fill="none" stroke="#5B6E8B" stroke-width="1.3"/><path d="M10.3 9.8 L14.6 14" stroke="#5B6E8B" stroke-width="1.6"/><path d="M4 6 H9" stroke="#5B6E8B" stroke-width="1.2"/></svg>
<div class="a" style="left:1228px;top:200px;width:120px;height:27px;background:#fff;border:1px solid #C6C6C6"></div>
<div class="a" style="left:1241.4px;top:207.30px;font-size:13px;line-height:13px;font-weight:normal;color:#222;">100%</div>
<svg class="a" style="left:1334px;top:209px" width="11" height="8" viewBox="0 0 11 8"><path d="M1.3 1.3 L5.5 5.6 L9.7 1.3" fill="none" stroke="#222" stroke-width="2"/></svg>
<div class="a" style="left:808px;top:230px;width:1105px;height:772px;overflow:hidden;background:#777777">
<div class="a" style="left:138px;top:0px;width:816px;height:800px;background:#fff"></div>
<div class="a" style="left:1091px;top:0px;width:14px;height:800px;background:#FAFAFA"></div>
<svg class="a" style="left:1092px;top:5px" width="12" height="9" viewBox="0 0 12 9"><path d="M1.5 7.5 L6 1.5 L10.5 7.5 Z" fill="#8A8A8A" stroke="#8A8A8A" stroke-width="1" stroke-linejoin="round"/></svg>
<div class="a" style="left:1094px;top:33px;width:8px;height:105px;background:#8C8C8C;border-radius:4px"></div>
<svg class="a" style="left:1092px;top:760px" width="12" height="9" viewBox="0 0 12 9"><path d="M1.5 1.5 L6 7.5 L10.5 1.5 Z" fill="#8A8A8A" stroke="#8A8A8A" stroke-width="1" stroke-linejoin="round"/></svg>
<div class="a" style="left:186px;top:0px;width:720px;height:13px;border:1.5px solid #2E2E2E;border-top:none"></div>
<div class="a" style="left:425px;top:0px;width:1.2px;height:13px;background:#333"></div>
<div class="a" style="left:665px;top:0px;width:1.2px;height:13px;background:#333"></div>
<div class="a" style="left:430.5px;top:-3.83px;font-size:13.5px;line-height:13.5px;font-weight:normal;color:#222;transform:scaleX(0.82);transform-origin:0 0">Project</div>
<div class="a" style="left:670.5px;top:-3.83px;font-size:13.5px;line-height:13.5px;font-weight:normal;color:#222;transform:scaleX(0.82);transform-origin:0 0">23 January 2026</div>
<div class="a" style="left:145.5px;width:800px;text-align:center;top:40.34px;font-size:32.2px;line-height:32.2px;font-weight:bold;color:#6E8097;transform:scaleX(0.82)">Reinforcement Details</div>
<div class="a" style="left:186px;top:97.09px;font-size:15.6px;line-height:15.6px;font-weight:bold;color:#111;transform:scaleX(0.815);transform-origin:0 0">Key Plan</div>
<div class="a" style="left:186px;top:130px;width:720px;height:250px;border:1px solid #8A8A8A"></div>
<svg class="a" style="left:0;top:0" width="1105" height="772" viewBox="808 230 1105 772"><path d="M1050 415 V560" stroke="#CDD0D6" stroke-width="1"/><path d="M1042 475.5 H1058" stroke="#CDD0D6" stroke-width="1"/><path d="M1252.5 415 V560" stroke="#CDD0D6" stroke-width="1"/><path d="M1244.5 475.5 H1260.5" stroke="#CDD0D6" stroke-width="1"/><path d="M1455 415 V560" stroke="#CDD0D6" stroke-width="1"/><path d="M1447 475.5 H1463" stroke="#CDD0D6" stroke-width="1"/><path d="M1657.5 415 V560" stroke="#CDD0D6" stroke-width="1"/><path d="M1649.5 475.5 H1665.5" stroke="#CDD0D6" stroke-width="1"/><path d="M1050 548.5 H1125.25 M1177.25 548.5 H1252.5" stroke="#CDD0D6" stroke-width="1"/><path d="M1252.5 548.5 H1327.75 M1379.75 548.5 H1455" stroke="#CDD0D6" stroke-width="1"/><path d="M1455 548.5 H1530.25 M1582.25 548.5 H1657.5" stroke="#CDD0D6" stroke-width="1"/><rect x="1441.5" y="425.5" width="28" height="28" fill="none" stroke="#8A8A8A" stroke-width="1"/><circle cx="1447.5" cy="431.5" r="3.8" fill="none" stroke="#8E96A6" stroke-width="0.9"/><circle cx="1447.5" cy="447.5" r="3.8" fill="none" stroke="#8E96A6" stroke-width="0.9"/><circle cx="1463.5" cy="431.5" r="3.8" fill="none" stroke="#8E96A6" stroke-width="0.9"/><circle cx="1463.5" cy="447.5" r="3.8" fill="none" stroke="#8E96A6" stroke-width="0.9"/></svg>
<div class="a" style="left:-158px;width:800px;text-align:center;top:165.72px;font-size:12.5px;line-height:12.5px;font-weight:normal;color:#111;transform:scaleX(0.98)">0+00.0</div>
<div class="a" style="left:-158px;width:800px;text-align:center;top:330.72px;font-size:12.5px;line-height:12.5px;font-weight:normal;color:#111;transform:scaleX(0.98)">P-0</div>
<div class="a" style="left:44.5px;width:800px;text-align:center;top:165.72px;font-size:12.5px;line-height:12.5px;font-weight:normal;color:#111;transform:scaleX(0.98)">0+25.0</div>
<div class="a" style="left:44.5px;width:800px;text-align:center;top:330.72px;font-size:12.5px;line-height:12.5px;font-weight:normal;color:#111;transform:scaleX(0.98)">P-1</div>
<div class="a" style="left:247px;width:800px;text-align:center;top:165.72px;font-size:12.5px;line-height:12.5px;font-weight:normal;color:#111;transform:scaleX(0.98)">0+50.0</div>
<div class="a" style="left:247px;width:800px;text-align:center;top:330.72px;font-size:12.5px;line-height:12.5px;font-weight:normal;color:#111;transform:scaleX(0.98)">P-2</div>
<div class="a" style="left:449.5px;width:800px;text-align:center;top:165.72px;font-size:12.5px;line-height:12.5px;font-weight:normal;color:#111;transform:scaleX(0.98)">0+75.0</div>
<div class="a" style="left:449.5px;width:800px;text-align:center;top:330.72px;font-size:12.5px;line-height:12.5px;font-weight:normal;color:#111;transform:scaleX(0.98)">P-3</div>
<div class="a" style="left:-56.75px;width:800px;text-align:center;top:311.72px;font-size:12.5px;line-height:12.5px;font-weight:normal;color:#111;transform:scaleX(0.98)">25.000</div>
<div class="a" style="left:145.75px;width:800px;text-align:center;top:311.72px;font-size:12.5px;line-height:12.5px;font-weight:normal;color:#111;transform:scaleX(0.98)">25.000</div>
<div class="a" style="left:348.25px;width:800px;text-align:center;top:311.72px;font-size:12.5px;line-height:12.5px;font-weight:normal;color:#111;transform:scaleX(0.98)">25.000</div>
<div class="a" style="left:186px;top:404px;width:720px;height:320px;border:1px solid #8A8A8A"></div>
<svg class="a" style="left:0;top:0" width="1105" height="772" viewBox="808 230 1105 772"><rect x="1324.5" y="655.5" width="59" height="21" fill="none" stroke="#666" stroke-width="1"/><path d="M1324.5 655.5 H1383.5" stroke="#5A6E8C" stroke-width="1.2"/><path d="M1328.5 676.5 V928.5 H1345.5 V676.5" fill="none" stroke="#555" stroke-width="1"/><path d="M1330.5 668 V928.5" stroke="#2A2A2A" stroke-width="0.9"/><path d="M1332.3 668 V928.5" stroke="#2A2A2A" stroke-width="0.9"/><path d="M1337.3 668 V928.5" stroke="#2A2A2A" stroke-width="0.9"/><path d="M1341.6 668 V928.5" stroke="#2A2A2A" stroke-width="0.9"/><path d="M1343.5 668 V928.5" stroke="#2A2A2A" stroke-width="0.9"/><path d="M1329.5 678.80 H1344.5" stroke="#2A2A2A" stroke-width="0.9"/><path d="M1329.5 682.14 H1344.5" stroke="#2A2A2A" stroke-width="0.9"/><path d="M1329.5 685.48 H1344.5" stroke="#2A2A2A" stroke-width="0.9"/><path d="M1329.5 688.82 H1344.5" stroke="#2A2A2A" stroke-width="0.9"/><path d="M1329.5 692.16 H1344.5" stroke="#2A2A2A" stroke-width="0.9"/><path d="M1329.5 695.50 H1344.5" stroke="#2A2A2A" stroke-width="0.9"/><path d="M1329.5 698.84 H1344.5" stroke="#2A2A2A" stroke-width="0.9"/><path d="M1329.5 702.18 H1344.5" stroke="#2A2A2A" stroke-width="0.9"/><path d="M1329.5 705.52 H1344.5" stroke="#2A2A2A" stroke-width="0.9"/><path d="M1329.5 708.86 H1344.5" stroke="#2A2A2A" stroke-width="0.9"/><path d="M1329.5 712.20 H1344.5" stroke="#2A2A2A" stroke-width="0.9"/><path d="M1329.5 715.54 H1344.5" stroke="#2A2A2A" stroke-width="0.9"/><path d="M1329.5 718.88 H1344.5" stroke="#2A2A2A" stroke-width="0.9"/><path d="M1329.5 722.22 H1344.5" stroke="#2A2A2A" stroke-width="0.9"/><path d="M1329.5 725.56 H1344.5" stroke="#2A2A2A" stroke-width="0.9"/><path d="M1329.5 728.90 H1344.5" stroke="#2A2A2A" stroke-width="0.9"/><path d="M1329.5 732.24 H1344.5" stroke="#2A2A2A" stroke-width="0.9"/><path d="M1329.5 735.58 H1344.5" stroke="#2A2A2A" stroke-width="0.9"/><path d="M1329.5 738.92 H1344.5" stroke="#2A2A2A" stroke-width="0.9"/><path d="M1329.5 742.26 H1344.5" stroke="#2A2A2A" stroke-width="0.9"/><path d="M1329.5 745.60 H1344.5" stroke="#2A2A2A" stroke-width="0.9"/><path d="M1329.5 748.94 H1344.5" stroke="#2A2A2A" stroke-width="0.9"/><path d="M1329.5 752.28 H1344.5" stroke="#2A2A2A" stroke-width="0.9"/><path d="M1329.5 755.62 H1344.5" stroke="#2A2A2A" stroke-width="0.9"/><path d="M1329.5 758.96 H1344.5" stroke="#2A2A2A" stroke-width="0.9"/><path d="M1329.5 762.30 H1344.5" stroke="#2A2A2A" stroke-width="0.9"/><path d="M1329.5 765.64 H1344.5" stroke="#2A2A2A" stroke-width="0.9"/><path d="M1329.5 768.98 H1344.5" stroke="#2A2A2A" stroke-width="0.9"/><path d="M1329.5 772.32 H1344.5" stroke="#2A2A2A" stroke-width="0.9"/><path d="M1329.5 775.66 H1344.5" stroke="#2A2A2A" stroke-width="0.9"/><path d="M1329.5 779.00 H1344.5" stroke="#2A2A2A" stroke-width="0.9"/><path d="M1329.5 782.34 H1344.5" stroke="#2A2A2A" stroke-width="0.9"/><path d="M1329.5 785.68 H1344.5" stroke="#2A2A2A" stroke-width="0.9"/><path d="M1329.5 789.02 H1344.5" stroke="#2A2A2A" stroke-width="0.9"/><path d="M1329.5 792.36 H1344.5" stroke="#2A2A2A" stroke-width="0.9"/><path d="M1329.5 795.70 H1344.5" stroke="#2A2A2A" stroke-width="0.9"/><path d="M1329.5 799.04 H1344.5" stroke="#2A2A2A" stroke-width="0.9"/><path d="M1329.5 802.38 H1344.5" stroke="#2A2A2A" stroke-width="0.9"/><path d="M1329.5 805.72 H1344.5" stroke="#2A2A2A" stroke-width="0.9"/><path d="M1329.5 809.06 H1344.5" stroke="#2A2A2A" stroke-width="0.9"/><path d="M1329.5 812.40 H1344.5" stroke="#2A2A2A" stroke-width="0.9"/><path d="M1329.5 815.74 H1344.5" stroke="#2A2A2A" stroke-width="0.9"/><path d="M1329.5 819.08 H1344.5" stroke="#2A2A2A" stroke-width="0.9"/><path d="M1329.5 822.42 H1344.5" stroke="#2A2A2A" stroke-width="0.9"/><path d="M1329.5 825.76 H1344.5" stroke="#2A2A2A" stroke-width="0.9"/><path d="M1329.5 829.10 H1344.5" stroke="#2A2A2A" stroke-width="0.9"/><path d="M1329.5 832.44 H1344.5" stroke="#2A2A2A" stroke-width="0.9"/><path d="M1329.5 835.78 H1344.5" stroke="#2A2A2A" stroke-width="0.9"/><path d="M1329.5 839.12 H1344.5" stroke="#2A2A2A" stroke-width="0.9"/><path d="M1329.5 842.46 H1344.5" stroke="#2A2A2A" stroke-width="0.9"/><path d="M1329.5 845.80 H1344.5" stroke="#2A2A2A" stroke-width="0.9"/><path d="M1329.5 849.14 H1344.5" stroke="#2A2A2A" stroke-width="0.9"/><path d="M1329.5 852.48 H1344.5" stroke="#2A2A2A" stroke-width="0.9"/><path d="M1329.5 855.82 H1344.5" stroke="#2A2A2A" stroke-width="0.9"/><path d="M1329.5 859.16 H1344.5" stroke="#2A2A2A" stroke-width="0.9"/><path d="M1329.5 862.50 H1344.5" stroke="#2A2A2A" stroke-width="0.9"/><path d="M1329.5 865.84 H1344.5" stroke="#2A2A2A" stroke-width="0.9"/><path d="M1329.5 869.18 H1344.5" stroke="#2A2A2A" stroke-width="0.9"/><path d="M1329.5 872.52 H1344.5" stroke="#2A2A2A" stroke-width="0.9"/><path d="M1329.5 875.86 H1344.5" stroke="#2A2A2A" stroke-width="0.9"/><path d="M1329.5 879.20 H1344.5" stroke="#2A2A2A" stroke-width="0.9"/><path d="M1329.5 882.54 H1344.5" stroke="#2A2A2A" stroke-width="0.9"/><path d="M1329.5 885.88 H1344.5" stroke="#2A2A2A" stroke-width="0.9"/><path d="M1329.5 889.22 H1344.5" stroke="#2A2A2A" stroke-width="0.9"/><path d="M1329.5 892.56 H1344.5" stroke="#2A2A2A" stroke-width="0.9"/><path d="M1329.5 895.90 H1344.5" stroke="#2A2A2A" stroke-width="0.9"/><path d="M1329.5 899.24 H1344.5" stroke="#2A2A2A" stroke-width="0.9"/><path d="M1329.5 902.58 H1344.5" stroke="#2A2A2A" stroke-width="0.9"/><path d="M1329.5 905.92 H1344.5" stroke="#2A2A2A" stroke-width="0.9"/><path d="M1329.5 909.26 H1344.5" stroke="#2A2A2A" stroke-width="0.9"/><path d="M1329.5 912.60 H1344.5" stroke="#2A2A2A" stroke-width="0.9"/><path d="M1329.5 915.94 H1344.5" stroke="#2A2A2A" stroke-width="0.9"/><path d="M1329.5 919.28 H1344.5" stroke="#2A2A2A" stroke-width="0.9"/><path d="M1329.5 922.62 H1344.5" stroke="#2A2A2A" stroke-width="0.9"/><path d="M1329.5 925.96 H1344.5" stroke="#2A2A2A" stroke-width="0.9"/><path d="M1337.3 928 V932" stroke="#333" stroke-width="1"/><path d="M1362.5 676.5 V928.5 H1379.5 V676.5" fill="none" stroke="#707070" stroke-width="1"/><path d="M1370.5 674 V932" stroke="#666" stroke-width="1" stroke-dasharray="5 6.6"/></svg>
<div class="a" style="left:145.5px;width:800px;text-align:center;top:739.22px;font-size:12.5px;line-height:12.5px;font-weight:bold;color:#111;transform:scaleX(0.84)">Elevation Along Bent</div>
</div>
<svg class="a" style="left:13px;top:1008px" width="10" height="5" viewBox="0 0 10 5"><rect x="0" y="0" width="3" height="5" fill="#6F7C8E"/><rect x="5" y="0" width="3" height="5" fill="#6F7C8E"/></svg>
<div class="a" style="left:31px;top:1007.84px;font-size:12px;line-height:12px;font-weight:normal;">Ready</div></body></html>
